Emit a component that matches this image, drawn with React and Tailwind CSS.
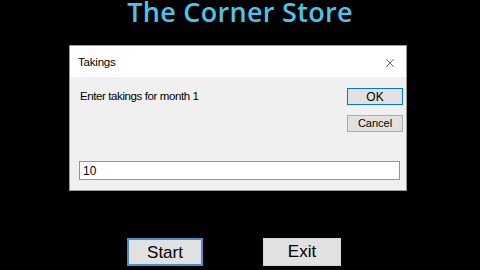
import { X } from 'lucide-react';

const App = () => {
  return (
    <div className="w-[480px] h-[270px] bg-black overflow-hidden flex flex-col" style={{ fontFamily: '"Liberation Sans", Arial, sans-serif' }}>
      {/* Heading */}
      <h1 className="h-[24px] pt-[1px] text-center text-[27px] leading-[22px] font-semibold text-[#4cc4ea] font-['Open_Sans',sans-serif] tracking-[0.3px]">
        The Corner Store
      </h1>

      {/* Input dialog */}
      <div className="ml-[69px] mt-[21px] w-[338px] h-[146px] border border-[#9a9a9a] bg-[#f0f0f0] flex flex-col">
        <div className="h-[31px] bg-white flex items-center justify-between pl-[8px] pr-[9px] pt-[2px]">
          <span className="text-[11.5px] text-black tracking-[-0.2px]">Takings</span>
          <X className="w-[14px] h-[14px] text-black" strokeWidth={1} />
        </div>
        <div className="flex-1 flex flex-col px-[9px]">
          <div className="flex justify-between mt-[11px]">
            <span className="text-[11.5px] text-black ml-[1px] tracking-[-0.4px]">Enter takings for month 1</span>
            <div className="flex flex-col gap-[10px] mr-[-6px]">
              <button className="w-[56px] h-[17px] bg-[#e1e1e1] border border-[#0078d7] text-[12px] leading-none text-black">OK</button>
              <button className="w-[56px] h-[17px] bg-[#e1e1e1] border border-[#adadad] text-[11px] leading-none text-black">Cancel</button>
            </div>
          </div>
          <div className="mt-[29px] w-[321px] h-[19px] bg-white border border-[#7a9cb8] flex items-center px-[3px] text-[12px] text-black">
            10
          </div>
        </div>
      </div>

      {/* Main buttons */}
      <div className="mt-[47px] flex">
        <button className="ml-[127px] w-[76px] h-[28px] bg-[#e1e1e1] border-2 border-[#4a90d0] text-[17px] text-black">Start</button>
        <button className="ml-[60px] w-[78px] h-[28px] bg-[#e1e1e1] border border-[#d4d4d4] text-[17px] text-black">Exit</button>
      </div>
    </div>
  );
};

export default App;
